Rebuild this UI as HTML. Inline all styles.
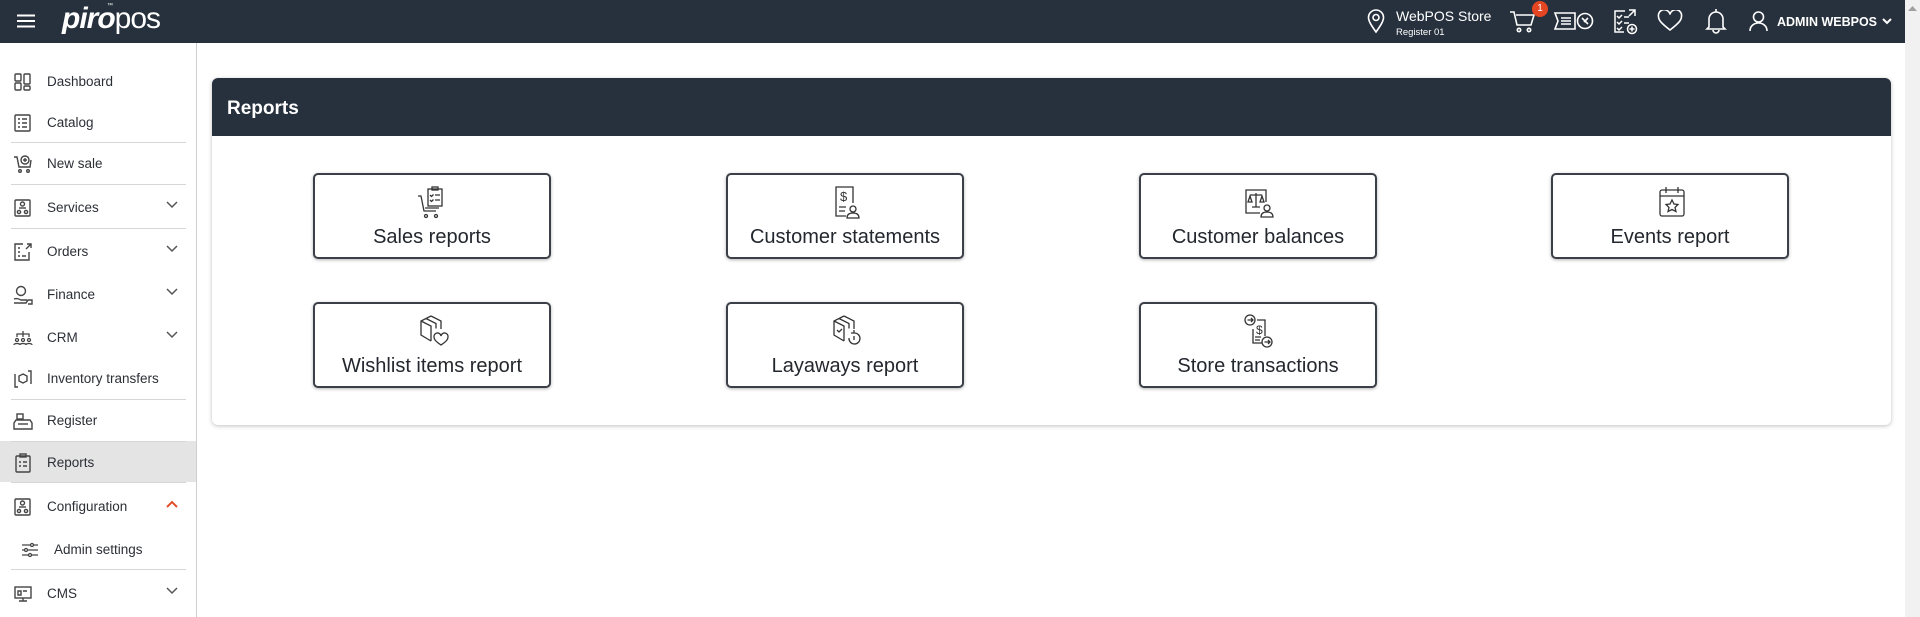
<!DOCTYPE html>
<html><head><meta charset="utf-8"><style>
*{box-sizing:border-box;margin:0;padding:0}
body{width:1920px;height:617px;overflow:hidden;background:#fff;font-family:"Liberation Sans",sans-serif;color:#2b2f36;position:relative}
.hdr{position:absolute;left:0;top:0;width:1905px;height:43px;background:#27313d;color:#fff}
.sb{position:absolute;left:1905px;top:0;width:15px;height:617px;background:#f1f1f1}
.side{position:absolute;left:0;top:43px;width:197px;height:574px;border-right:1px solid #cfcfcf}
.it{position:absolute;left:0;width:196px;height:40px;display:flex;align-items:center;font-size:13.5px}
.it .ic{position:absolute;left:13px;top:11px;width:20px;height:20px}
.it span{position:absolute;left:47px}
.it .ch{position:absolute;left:166px;top:14px}
.dv{position:absolute;left:11px;width:175px;height:1px;background:#d6d6d6}
.panel{position:absolute;left:212px;top:78px;width:1679px;height:347px;border-radius:6px;box-shadow:0 1px 4px rgba(0,0,0,.25);background:#fff}
.ph{height:58px;background:#27313d;border-radius:6px 6px 0 0;color:#fff;font-weight:bold;font-size:19px;padding:20px 0 0 15px}
.card{position:absolute;width:238px;height:86px;border:2px solid #3b4048;border-radius:5px;box-shadow:0 1px 3px rgba(0,0,0,.3);text-align:center;font-size:20px;background:#fff;color:#23272e}
.card svg{position:absolute;left:102px;top:10px}
.card div{position:absolute;left:0;right:0;top:51px}
</style></head><body>
<div class="hdr">
<svg style="position:absolute;left:17px;top:14px" width="18" height="14"><path d="M0 1.5H18M0 7H18M0 12.5H18" stroke="#fff" stroke-width="2"/></svg>
<div style="position:absolute;left:62px;top:2px;font-size:30px;letter-spacing:-1px"><b style="font-style:italic">piro</b><span style="font-weight:300">pos</span></div>
<div style="position:absolute;left:107px;top:3px;font-size:6px">™</div>
<svg style="position:absolute;left:1367px;top:9px" width="18" height="25" fill="none" stroke="#fff" stroke-width="1.6"><path d="M9 23C4 16 1.5 12 1.5 8.5a7.5 7.5 0 0115 0C16.5 12 14 16 9 23z"/><circle cx="9" cy="8.5" r="3"/></svg>
<div style="position:absolute;left:1396px;top:8px;font-size:14px">WebPOS Store</div>
<div style="position:absolute;left:1396px;top:27px;font-size:9.5px">Register 01</div>
<svg style="position:absolute;left:1509px;top:10px" width="28" height="24" fill="none" stroke="#fff" stroke-width="1.6"><path d="M1 2h4l3 13h14l3-10H7"/><circle cx="10" cy="20" r="1.7"/><circle cx="20" cy="20" r="1.7"/></svg>
<div style="position:absolute;left:1532px;top:1px;width:16px;height:16px;border-radius:8px;background:#e44623;font-size:10px;text-align:center;line-height:16px">1</div>
<svg style="position:absolute;left:1553px;top:10px" width="41" height="22" fill="none" stroke="#fff" stroke-width="1.6"><path d="M2 3h20v16H2l3-8z"/><path d="M8 8h10M8 11h10M8 14h10"/><circle cx="32" cy="11" r="7.5"/><path d="M29 8l6 6M35 8l-4 4"/></svg>
<svg style="position:absolute;left:1613px;top:8px" width="25" height="27" fill="none" stroke="#fff" stroke-width="1.5"><path d="M12 3H2v21h9"/><path d="M4 8l2 2 3-3M4 14l2 2 3-3M4 20l2 2 3-3M11 9h5M11 15h5M16 2h6v6M22 2l-6 6"/><circle cx="19" cy="21" r="4.5"/><path d="M19 18.5v5M16.5 21h5"/></svg>
<svg style="position:absolute;left:1657px;top:10px" width="26" height="22" fill="none" stroke="#fff" stroke-width="1.6"><path d="M13 20C4 13 1.5 10 1.5 6.5a5.5 5.5 0 0111.5-2 5.5 5.5 0 0111.5 2C24.5 10 22 13 13 20z"/></svg>
<svg style="position:absolute;left:1705px;top:8px" width="22" height="26" fill="none" stroke="#fff" stroke-width="1.6"><path d="M11 1v3M4 19V11a7 7 0 0114 0v8l2 2H2zM8 22a3 3 0 006 0"/></svg>
<svg style="position:absolute;left:1749px;top:10px" width="19" height="22" fill="none" stroke="#fff" stroke-width="1.6"><circle cx="9.5" cy="7" r="5"/><path d="M1 21c0-5 4-8 8.5-8s8.5 3 8.5 8"/></svg>
<div style="position:absolute;left:1777px;top:15px;font-size:12.5px;font-weight:bold">ADMIN WEBPOS</div>
<svg style="position:absolute;left:1882px;top:18px" width="10" height="7" fill="none" stroke="#fff" stroke-width="2"><path d="M1 1l4 4 4-4"/></svg>
</div>
<div class="sb"><svg style="position:absolute;left:3px;top:6px" width="9" height="5"><path d="M0 5L4.5 0 9 5z" fill="#a0a0a0"/></svg></div>

<div class="side">
<div class="it" style="top:18px"><svg class="ic" viewBox="0 0 20 20" fill="none" stroke="#444" stroke-width="1.4"><rect x="2" y="2" width="6" height="7" rx="1"/><rect x="11" y="2" width="6" height="10" rx="1"/><rect x="2" y="11" width="6" height="7" rx="1"/><rect x="11" y="14" width="6" height="4" rx="1"/></svg><span>Dashboard</span></div>
<div class="it" style="top:59px"><svg class="ic" viewBox="0 0 20 20" fill="none" stroke="#444" stroke-width="1.4"><rect x="2" y="2" width="15" height="16" rx="1"/><path d="M5 6h2M5 10h2M5 14h2M9 6h5M9 10h5M9 14h5"/></svg><span>Catalog</span></div>
<div class="dv" style="top:99px"></div>
<div class="it" style="top:100px"><svg class="ic" viewBox="0 0 20 20" fill="none" stroke="#444" stroke-width="1.4"><path d="M1 3h3l2 10h11l1-7"/><circle cx="12" cy="6" r="4"/><path d="M12 4v4M10 6h4"/><circle cx="7" cy="17" r="1.3"/><circle cx="15" cy="17" r="1.3"/></svg><span>New sale</span></div>
<div class="dv" style="top:141px"></div>
<div class="it" style="top:144px"><svg class="ic" viewBox="0 0 20 20" fill="none" stroke="#444" stroke-width="1.4"><rect x="2" y="2" width="15" height="16" rx="1"/><circle cx="9.5" cy="6" r="2"/><circle cx="6" cy="14" r="1.6"/><circle cx="13" cy="14" r="1.6"/><path d="M6 10h7"/></svg><span>Services</span><svg class="ch" width="12" height="8" fill="none" stroke="#555" stroke-width="1.5"><path d="M1 1l5 5 5-5"/></svg></div>
<div class="dv" style="top:185px"></div>
<div class="it" style="top:188px"><svg class="ic" viewBox="0 0 20 20" fill="none" stroke="#444" stroke-width="1.4"><path d="M10 2H2v16h14v-8"/><path d="M5 6h2M5 10h2M5 14h2M9 14h4M14 2h4v4M18 2l-5 5"/></svg><span>Orders</span><svg class="ch" width="12" height="8" fill="none" stroke="#555" stroke-width="1.5"><path d="M1 1l5 5 5-5"/></svg></div>
<div class="it" style="top:231px"><svg class="ic" viewBox="0 0 20 20" fill="none" stroke="#444" stroke-width="1.4"><circle cx="8" cy="6" r="4.5"/><path d="M1 14c3-1 5 0 7 1h6M1 18h12l2-3h4v4h-4"/></svg><span>Finance</span><svg class="ch" width="12" height="8" fill="none" stroke="#555" stroke-width="1.5"><path d="M1 1l5 5 5-5"/></svg></div>
<div class="it" style="top:274px"><svg class="ic" viewBox="0 0 20 20" fill="none" stroke="#444" stroke-width="1.3"><path d="M4 9V6h12v3M10 3v6"/><circle cx="4" cy="12" r="1.5"/><circle cx="10" cy="12" r="1.5"/><circle cx="16" cy="12" r="1.5"/><path d="M1 17c0-2 6-2 6 0M7 17c0-2 6-2 6 0M13 17c0-2 6-2 6 0"/></svg><span>CRM</span><svg class="ch" width="12" height="8" fill="none" stroke="#555" stroke-width="1.5"><path d="M1 1l5 5 5-5"/></svg></div>
<div class="it" style="top:315px"><svg class="ic" viewBox="0 0 20 20" fill="none" stroke="#444" stroke-width="1.4"><path d="M2 5v13h3M18 15V2h-3"/><path d="M10 5l4 2v5l-4 2-4-2V7z"/></svg><span>Inventory transfers</span></div>
<div class="dv" style="top:356px"></div>
<div class="it" style="top:357px"><svg class="ic" viewBox="0 0 20 20" fill="none" stroke="#444" stroke-width="1.4"><path d="M1 18h18v-6l-2-3H3l-2 3z"/><rect x="4" y="3" width="6" height="5"/><path d="M5 13h10"/></svg><span>Register</span></div>
<div style="position:absolute;left:0;top:398px;width:196px;height:41px;background:#e4e4e4"></div>
<div class="dv" style="top:398px"></div>
<div class="it" style="top:399px"><svg class="ic" viewBox="0 0 20 20" fill="none" stroke="#444" stroke-width="1.4"><rect x="3" y="3" width="14" height="16" rx="1"/><rect x="7" y="1" width="6" height="3"/><path d="M6 9h2M6 13h2M10 9h4M10 13h4"/></svg><span>Reports</span></div>
<div class="dv" style="top:439px"></div>
<div class="it" style="top:443px"><svg class="ic" viewBox="0 0 20 20" fill="none" stroke="#444" stroke-width="1.4"><rect x="2" y="2" width="15" height="16" rx="1"/><circle cx="9.5" cy="6" r="2"/><circle cx="6" cy="14" r="1.6"/><circle cx="13" cy="14" r="1.6"/><path d="M6 10h7"/></svg><span>Configuration</span><svg class="ch" width="12" height="8" fill="none" stroke="#e0502a" stroke-width="2"><path d="M1 7l5-5 5 5"/></svg></div>
<div class="it" style="top:486px"><svg class="ic" viewBox="0 0 20 20" style="left:20px" fill="none" stroke="#444" stroke-width="1.3"><path d="M2 5h16M2 10h16M2 15h16"/><circle cx="12" cy="5" r="1.5" fill="#fff"/><circle cx="6" cy="10" r="1.5" fill="#fff"/><circle cx="10" cy="15" r="1.5" fill="#fff"/></svg><span style="left:54px">Admin settings</span></div>
<div class="dv" style="top:526px"></div>
<div class="it" style="top:530px"><svg class="ic" viewBox="0 0 20 20" fill="none" stroke="#444" stroke-width="1.4"><rect x="2" y="3" width="16" height="11"/><path d="M6 17h8M10 14v3M5 7h3v4H5zM10 7h4"/></svg><span>CMS</span><svg class="ch" width="12" height="8" fill="none" stroke="#555" stroke-width="1.5"><path d="M1 1l5 5 5-5"/></svg></div>
</div>

<div class="panel"><div class="ph">Reports</div></div>

<div class="card" style="left:313px;top:173px"><svg width="34" height="36" viewBox="0 0 34 36" fill="none" stroke="#333" stroke-width="1.3"><path d="M1 11h3l3 15h12"/><rect x="11" y="4" width="14" height="17"/><rect x="15" y="2" width="6" height="3"/><path d="M13 10l1.5 1.5 2-2M13 15l1.5 1.5 2-2M18 10h5M18 15h5M8 23h14"/><circle cx="9" cy="31" r="1.5"/><circle cx="19" cy="31" r="1.5"/></svg><div>Sales reports</div></div>
<div class="card" style="left:726px;top:173px"><svg width="34" height="36" viewBox="0 0 34 36" fill="none" stroke="#333" stroke-width="1.3"><path d="M16 31H6V2h17v16"/><text x="10" y="16" font-size="13" font-family="Liberation Sans" fill="#333" stroke="none">$</text><path d="M9 22h7M9 26h6"/><circle cx="23" cy="24" r="3"/><path d="M17 33c0-4 3-5 6-5s6 1 6 5z"/></svg><div>Customer statements</div></div>
<div class="card" style="left:1139px;top:173px"><svg width="34" height="36" viewBox="0 0 34 36" fill="none" stroke="#333" stroke-width="1.3"><path d="M17 28H3V5h20v12"/><path d="M13 8v14M7 10h12M5 17l2-6 2 6zM17 17l2-6 2 6zM9 22h8"/><circle cx="24" cy="23" r="3"/><path d="M18 32c0-4 3-5 6-5s6 1 6 5z"/></svg><div>Customer balances</div></div>
<div class="card" style="left:1551px;top:173px"><svg width="34" height="36" viewBox="0 0 34 36" fill="none" stroke="#333" stroke-width="1.3"><rect x="5" y="5" width="24" height="26" rx="2"/><path d="M5 11h24M11 2v6M23 2v6M17 15l2 4 4 .5-3 3 1 4-4-2-4 2 1-4-3-3 4-.5z"/></svg><div>Events report</div></div>
<div class="card" style="left:313px;top:302px"><svg width="34" height="36" viewBox="0 0 34 36" fill="none" stroke="#333" stroke-width="1.3"><path d="M14 2l10 5v8M14 2L4 7v14l10 6M4 7l10 5v15M9 4.5l10 5v5"/><path d="M24 31c-6-4-7-6-7-8a3.5 3.5 0 017-1 3.5 3.5 0 017 1c0 2-1 4-7 8z"/></svg><div>Wishlist items report</div></div>
<div class="card" style="left:726px;top:302px"><svg width="34" height="36" viewBox="0 0 34 36" fill="none" stroke="#333" stroke-width="1.3"><path d="M14 2l10 5v8M14 2L4 7v14l10 6M4 7l10 5v15M9 4.5l10 5v5M7 16l2 2 3-3"/><path d="M19 24a5.5 5.5 0 105-5M24 16v3h-3M24 22v4"/></svg><div>Layaways report</div></div>
<div class="card" style="left:1139px;top:302px"><svg width="34" height="36" viewBox="0 0 34 36" fill="none" stroke="#333" stroke-width="1.3"><circle cx="7" cy="6" r="5"/><path d="M4.5 6h5M8 4l2 2-2 2M14 6h8v16M10 15v14h9"/><text x="13" y="20" font-size="12" font-family="Liberation Sans" fill="#333" stroke="none">$</text><path d="M12 23h6M12 26h5"/><circle cx="24" cy="28" r="5"/><path d="M21.5 28h5M25 26l2 2-2 2"/></svg><div>Store transactions</div></div>
</body></html>
